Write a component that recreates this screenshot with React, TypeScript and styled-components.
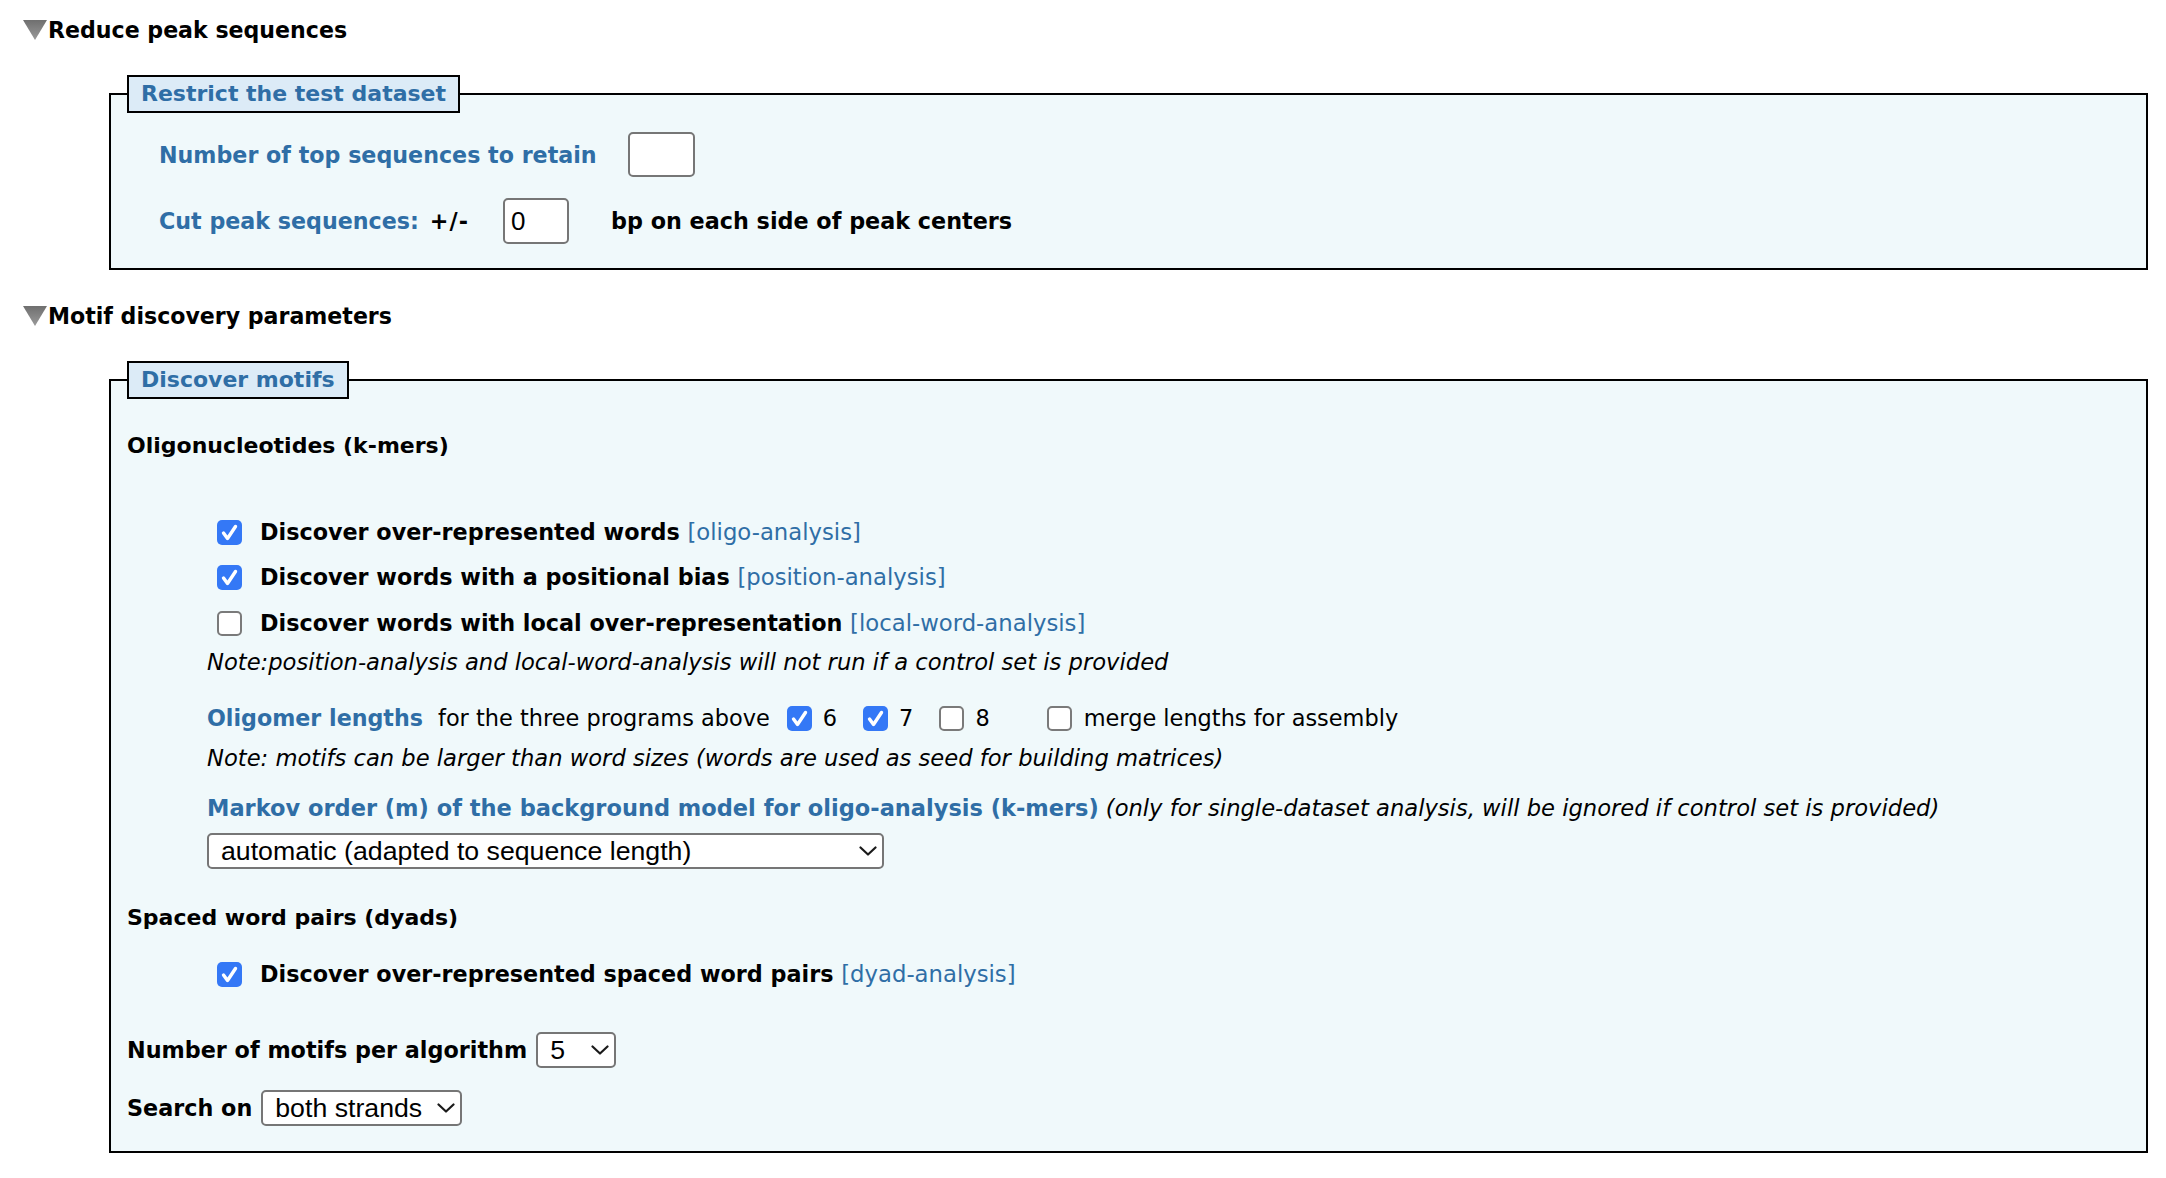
import React from "react";
import styled, { createGlobalStyle } from "styled-components";

const BLUE = "#2f6ea6";

const GlobalStyle = createGlobalStyle`
  html, body { margin: 0; padding: 0; background: #ffffff; }
  body {
    font-family: "DejaVu Sans", Verdana, sans-serif;
    color: #000;
    font-size: 22px;
  }
`;

const Page = styled.div`
  padding: 15px 18px 26px 22px;
`;

const SectionHeader = styled.div<{ $mt: number }>`
  display: flex;
  align-items: center;
  height: 30px;
  margin-top: ${(p) => p.$mt}px;
  font-weight: bold;
  font-size: 22.1px;
`;

const Fieldset = styled.fieldset<{ $pt: number; $pb: number }>`
  margin: 30px 0 0 87px;
  border: 2px solid #000;
  background: #f0f9fb;
  padding: ${(p) => p.$pt}px 0 ${(p) => p.$pb}px 16px;
  min-width: 0;
`;

const Legend = styled.legend`
  background: #dcebf7;
  border: 2px solid #000;
  padding: 4px 12px;
  margin: 0;
  color: ${BLUE};
  font-weight: bold;
  font-size: 22px;
  line-height: 26px;
`;

const Indent = styled.div<{ $pl: number }>`
  padding-left: ${(p) => p.$pl}px;
`;

const Row = styled.div<{ $mt?: number; $h?: number; $ml?: number }>`
  display: flex;
  align-items: center;
  height: ${(p) => p.$h ?? 30}px;
  margin-top: ${(p) => p.$mt ?? 0}px;
  margin-left: ${(p) => p.$ml ?? 0}px;
  white-space: nowrap;
`;

const BlueLabel = styled.span<{ $size?: number }>`
  color: ${BLUE};
  font-weight: bold;
  font-size: ${(p) => p.$size ?? 22.2}px;
`;

const BoldText = styled.span<{ $ml?: number }>`
  font-weight: bold;
  font-size: 22.3px;
  margin-left: ${(p) => p.$ml ?? 0}px;
`;

const Sign = styled.span`
  font-weight: bold;
  font-size: 22.3px;
  letter-spacing: 1px;
  margin-left: 11px;
`;

const PlainText = styled.span<{ $ml?: number }>`
  font-size: 22.45px;
  margin-left: ${(p) => p.$ml ?? 0}px;
`;

const Italic = styled.span`
  font-style: italic;
  font-size: 22.65px;
`;

const LinkText = styled.span`
  color: ${BLUE};
  font-weight: normal;
  font-size: 22.75px;
`;

const SubHeading = styled.div<{ $mt: number }>`
  height: 30px;
  display: flex;
  align-items: center;
  margin-top: ${(p) => p.$mt}px;
  font-weight: bold;
`;

const TextInput = styled.input<{ $w: number; $h: number; $ml: number }>`
  box-sizing: border-box;
  width: ${(p) => p.$w}px;
  height: ${(p) => p.$h}px;
  margin: 0 0 0 ${(p) => p.$ml}px;
  border: 2px solid #767676;
  border-radius: 5px;
  background: #fff;
  padding: 0 6px;
  font-family: "Liberation Sans", Arial, sans-serif;
  font-size: 26px;
  color: #000;
  outline: none;
`;

const Check = styled.span<{ $on: boolean; $ml?: number }>`
  box-sizing: border-box;
  flex: none;
  width: 25px;
  height: 25px;
  margin-left: ${(p) => p.$ml ?? 0}px;
  border-radius: 5px;
  border: ${(p) => (p.$on ? "none" : "2px solid #7a7a7a")};
  background: ${(p) => (p.$on ? "#3478f6" : "#ffffff")};
  display: inline-flex;
  align-items: center;
  justify-content: center;
`;

const SelectBox = styled.div<{ $w: number; $ml?: number; $mt?: number }>`
  box-sizing: border-box;
  width: ${(p) => p.$w}px;
  height: 36px;
  margin-left: ${(p) => p.$ml ?? 0}px;
  margin-top: ${(p) => p.$mt ?? 0}px;
  border: 2px solid #767676;
  border-radius: 5px;
  background: #fff;
  display: flex;
  align-items: center;
  justify-content: space-between;
  padding: 0 5px 0 12px;
  font-family: "Liberation Sans", Arial, sans-serif;
  font-size: 26.7px;
  color: #000;
  white-space: nowrap;
`;

const Triangle = () => (
  <svg width="26" height="22" viewBox="0 0 26 22" style={{ flex: "none" }}>
    <defs>
      <linearGradient id="tri" x1="0" y1="0" x2="0" y2="1">
        <stop offset="0" stopColor="#6f6f6f" />
        <stop offset="1" stopColor="#9a9a9a" />
      </linearGradient>
    </defs>
    <polygon points="1,1 25,1 13,21" fill="url(#tri)" />
  </svg>
);

const CheckMark = () => (
  <svg width="25" height="25" viewBox="0 0 25 25">
    <polyline
      points="6.5,13 10.5,18.5 18.5,6.5"
      fill="none"
      stroke="#fff"
      strokeWidth="3.4"
      strokeLinecap="round"
      strokeLinejoin="round"
    />
  </svg>
);

const Chevron = () => (
  <svg width="18" height="10" viewBox="0 0 18 10" style={{ flex: "none" }}>
    <polyline
      points="1.5,1.5 9,8.5 16.5,1.5"
      fill="none"
      stroke="#1a1a1a"
      strokeWidth="2.2"
      strokeLinecap="round"
      strokeLinejoin="round"
    />
  </svg>
);

const Checkbox = ({ on, ml }: { on: boolean; ml?: number }) => (
  <Check $on={on} $ml={ml}>
    {on && <CheckMark />}
  </Check>
);

const Select = ({ w, ml, mt, value }: { w: number; ml?: number; mt?: number; value: string }) => (
  <SelectBox $w={w} $ml={ml} $mt={mt}>
    <span>{value}</span>
    <Chevron />
  </SelectBox>
);

const ProgramRow = ({
  on,
  label,
  link,
  mt,
}: {
  on: boolean;
  label: string;
  link: string;
  mt: number;
}) => (
  <Row $mt={mt} $ml={10}>
    <Checkbox on={on} />
    <BoldText $ml={18}>
      {label} <LinkText>{link}</LinkText>
    </BoldText>
  </Row>
);

export default function App() {
  return (
    <>
      <GlobalStyle />
      <Page>
        <SectionHeader $mt={0}>
          <Triangle />
          Reduce peak sequences
        </SectionHeader>

        <Fieldset $pt={19} $pb={24}>
          <Legend>Restrict the test dataset</Legend>
          <Indent $pl={32}>
            <Row $h={45}>
              <BlueLabel>Number of top sequences to retain</BlueLabel>
              <TextInput $w={67} $h={45} $ml={31} defaultValue="" />
            </Row>
            <Row $h={46} $mt={21}>
              <BlueLabel>Cut peak sequences:</BlueLabel>
              <Sign>+/-</Sign>
              <TextInput $w={66} $h={46} $ml={34} defaultValue="0" />
              <BoldText $ml={42}>bp on each side of peak centers</BoldText>
            </Row>
          </Indent>
        </Fieldset>

        <SectionHeader $mt={31}>
          <Triangle />
          Motif discovery parameters
        </SectionHeader>

        <Fieldset $pt={31} $pb={25}>
          <Legend>Discover motifs</Legend>
          <SubHeading $mt={0}>Oligonucleotides (k-mers)</SubHeading>
          <Indent $pl={80}>
            <ProgramRow on mt={57} label="Discover over-represented words" link="[oligo-analysis]" />
            <ProgramRow on mt={15} label="Discover words with a positional bias" link="[position-analysis]" />
            <ProgramRow
              on={false}
              mt={16}
              label="Discover words with local over-representation"
              link="[local-word-analysis]"
            />
            <Row $mt={9}>
              <Italic>Note:position-analysis and local-word-analysis will not run if a control set is provided</Italic>
            </Row>
            <Row $mt={26}>
              <BlueLabel>Oligomer lengths</BlueLabel>
              <PlainText $ml={15}>for the three programs above</PlainText>
              <Checkbox on ml={17} />
              <PlainText $ml={11}>6</PlainText>
              <Checkbox on ml={26} />
              <PlainText $ml={11}>7</PlainText>
              <Checkbox on={false} ml={26} />
              <PlainText $ml={11}>8</PlainText>
              <Checkbox on={false} ml={57} />
              <PlainText $ml={12}>merge lengths for assembly</PlainText>
            </Row>
            <Row $mt={10}>
              <Italic>Note: motifs can be larger than word sizes (words are used as seed for building matrices)</Italic>
            </Row>
            <Row $mt={20}>
              <BlueLabel $size={22.5}>Markov order (m) of the background model for oligo-analysis (k-mers)</BlueLabel>
              <PlainText $ml={7}>
                <Italic>(only for single-dataset analysis, will be ignored if control set is provided)</Italic>
              </PlainText>
            </Row>
            <Select w={677} mt={10} value="automatic (adapted to sequence length)" />
          </Indent>

          <SubHeading $mt={33}>Spaced word pairs (dyads)</SubHeading>
          <Indent $pl={80}>
            <ProgramRow
              on
              mt={27}
              label="Discover over-represented spaced word pairs"
              link="[dyad-analysis]"
            />
          </Indent>

          <Row $mt={43} $h={36}>
            <BoldText>Number of motifs per algorithm</BoldText>
            <Select w={80} ml={9} value="5" />
          </Row>
          <Row $mt={22} $h={36}>
            <BoldText>Search on</BoldText>
            <Select w={201} ml={9} value="both strands" />
          </Row>
        </Fieldset>
      </Page>
    </>
  );
}
